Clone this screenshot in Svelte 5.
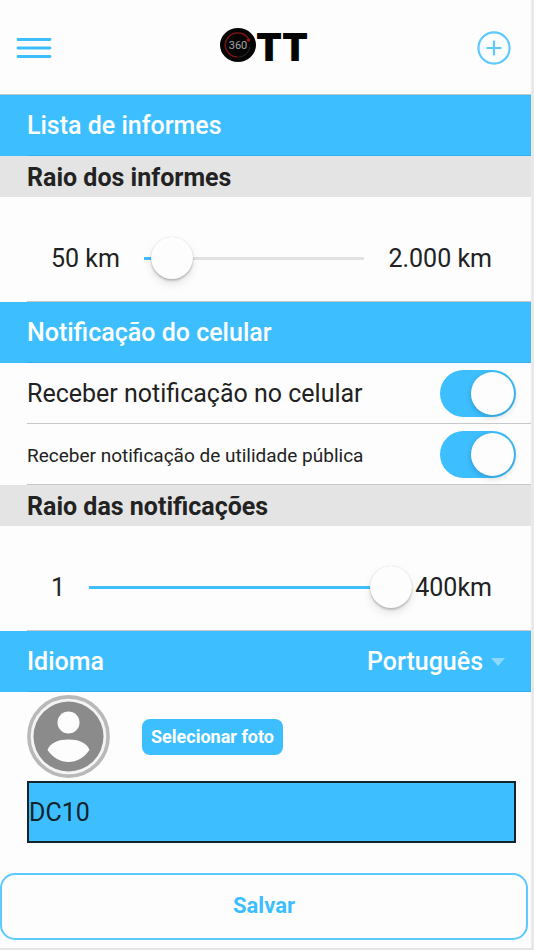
<script>
  let reportRadius = $state(50);
  let notifyRadius = $state(400);
  let mobile = $state(true);
  let publicUtility = $state(true);
  let language = $state('pt');
  let name = $state('DC10');

  const reportMin = 0;
  const reportMax = 390;
  const notifyMin = 1;
  const notifyMax = 400;

  const share = (value, min, max) => (value - min) / (max - min);
</script>

<div class="screen">
  <header>
    <button class="icon" aria-label="Menu">
      <svg width="36" height="24" viewBox="0 0 36 24" fill="none" stroke="#3dbfff" stroke-width="2.8" stroke-linecap="round">
        <path d="M2 3.500H34M2 12H34M2 20.500H34" />
      </svg>
    </button>
    <svg class="logo" width="88" height="40" viewBox="0 0 88 40" role="img" aria-label="360 OTT">
      <ellipse cx="18" cy="20" rx="18" ry="17" fill="#050505" />
      <path d="M28 13A12.500 12 0 1 0 18 32" fill="none" stroke="#7c1215" stroke-width="1.500" />
      <path d="M19 32A12 12 0 0 0 30 22" fill="none" stroke="#2b2b2b" stroke-width="1" />
      <circle cx="28.500" cy="15" r="1.700" fill="#a31518" />
      <text x="18" y="24" text-anchor="middle" class="degrees">360</text>
      <text x="36" y="36" class="letters">TT</text>
    </svg>
    <button class="icon" aria-label="Adicionar">
      <svg width="36" height="36" viewBox="0 0 36 36" fill="none" stroke="#5cc9ff" stroke-width="2.2">
        <circle cx="18" cy="18" r="15.600" />
        <path d="M18 10.500V25.500M10.500 18H25.500" />
      </svg>
    </button>
  </header>

  <main>
    <h2 class="bar"><span class="line">Lista de informes</span></h2>
    <h3>Raio dos informes</h3>
    <div class="row">
      <label class="line range">
        <span>50 km</span>
        <input
          type="range"
          aria-label="Raio dos informes"
          min={reportMin}
          max={reportMax}
          bind:value={reportRadius}
          style="--share: {share(reportRadius, reportMin, reportMax)}"
        />
        <span>2.000 km</span>
      </label>
    </div>

    <h2 class="bar"><span class="line">Notificação do celular</span></h2>
    <div class="row">
      <label class="line toggle">
        <span>Receber notificação no celular</span>
        <input type="checkbox" bind:checked={mobile} />
      </label>
    </div>
    <div class="row">
      <label class="line toggle">
        <span class="small">Receber notificação de utilidade pública</span>
        <input type="checkbox" bind:checked={publicUtility} />
      </label>
    </div>
    <h3>Raio das notificações</h3>
    <div class="row">
      <label class="line range">
        <span>1</span>
        <input
          type="range"
          aria-label="Raio das notificações"
          min={notifyMin}
          max={notifyMax}
          bind:value={notifyRadius}
          style="--share: {share(notifyRadius, notifyMin, notifyMax)}"
        />
        <span>400km</span>
      </label>
    </div>

    <div class="bar">
      <label class="line language">
        <span>Idioma</span>
        <span class="picker">
          <select bind:value={language}>
            <option value="pt">Português</option>
            <option value="en">English</option>
            <option value="es">Español</option>
          </select>
          <svg width="14" height="8" viewBox="0 0 14 8" aria-hidden="true"><path d="M0 0H14L7 8Z" fill="#8bd8ff" /></svg>
        </span>
      </label>
    </div>

    <form onsubmit={(event) => event.preventDefault()}>
      <div class="profile">
        <div class="photo">
          <svg width="83" height="83" viewBox="0 0 83 83" role="img" aria-label="Foto do perfil">
            <circle cx="41.500" cy="41.500" r="39.600" fill="#f4f4f4" stroke="#b9b9b9" stroke-width="3.600" />
            <circle cx="41.500" cy="41.500" r="35" fill="#8b8b8b" />
            <circle cx="41.500" cy="27.500" r="11" fill="#fdfdfd" />
            <path d="M20.500 55C23 47.500 32 44.500 41.500 44.500S60 47.500 62.500 55C57 63 49.500 67 41.500 67S26 63 20.500 55Z" fill="#fdfdfd" />
          </svg>
          <button type="button" class="pick">Selecionar foto</button>
        </div>
        <input class="name" type="text" aria-label="Nome" bind:value={name} />
      </div>
      <button type="submit" class="save">Salvar</button>
    </form>
  </main>
</div>

<style>
  :global(body) {
    background: #fdfdfd;
  }

  .screen {
    box-sizing: border-box;
    min-height: 100vh;
    border-right: 3px solid #e9e9e9;
    border-bottom: 2px solid #e4e4e4;
    background: #fdfdfd;
    color: #222;
    font: 400 25px/30px Roboto, sans-serif;
  }

  button,
  input,
  select {
    margin: 0;
    font: inherit;
    color: inherit;
  }

  header {
    display: flex;
    align-items: center;
    justify-content: space-between;
    box-sizing: border-box;
    height: 95px;
    padding: 2px 19px 0 16px;
    border-bottom: 1px solid #bfc6ca;
  }

  .icon {
    display: flex;
    padding: 0;
    border: 0;
    background: none;
  }

  .logo {
    margin-bottom: 6px;
    overflow: visible;
  }

  .degrees {
    font: 400 11px Roboto, sans-serif;
    fill: #a5a5a5;
  }

  .letters {
    font: 900 38px Inter, sans-serif;
    fill: #050505;
  }

  h2,
  h3 {
    margin: 0;
    font: inherit;
  }

  .bar {
    padding-left: 27px;
    background: #3dbfff;
    color: #fff;
    font-weight: 500;
  }

  .line {
    display: flex;
    align-items: center;
    box-sizing: border-box;
    min-height: 61px;
    border-bottom: 1px solid #c6c8ca;
  }

  .bar .line {
    padding-top: 2px;
    border-bottom: 1px solid #35b0ee;
  }

  h3 {
    box-sizing: border-box;
    height: 41px;
    padding: 7px 27px 0;
    background: #e4e4e4;
    font-weight: 700;
  }

  .row {
    padding-left: 27px;
  }

  .range {
    min-height: 105px;
    padding: 18px 39px 0 24px;
  }

  .range span {
    padding-top: 2px;
  }

  /* The thumb centre travels the whole track, so the box is 21px wider at each end. */
  .range input {
    flex: 1;
    min-width: 0;
    height: 42px;
    margin: 0 3px;
    appearance: none;
    background: none;
  }

  .range input::-webkit-slider-runnable-track {
    --end: calc(21px + (100% - 42px) * var(--share));
    height: 3px;
    background: linear-gradient(
      to right,
      transparent 21px,
      #3dbfff 21px,
      #3dbfff var(--end),
      #e2e2e2 var(--end),
      #e2e2e2 calc(100% - 21px),
      transparent calc(100% - 21px)
    );
  }

  .range input::-webkit-slider-thumb {
    width: 42px;
    height: 42px;
    margin-top: -20px;
    appearance: none;
    border-radius: 50%;
    background: #fdfdfd;
    box-shadow: 0 0 1px rgb(0 0 0 / 20%), 0 2px 2px rgb(0 0 0 / 18%), 0 5px 10px rgb(0 0 0 / 10%);
  }

  .toggle {
    justify-content: space-between;
    padding-right: 15px;
  }

  .toggle span {
    padding-top: 2px;
  }

  .toggle .small {
    padding-top: 4px;
    font-size: 19px;
  }

  .toggle input {
    display: flex;
    flex: none;
    box-sizing: border-box;
    width: 76px;
    height: 47px;
    padding: 2px;
    appearance: none;
    border-radius: 24px;
    background: #dcdcdc;
  }

  .toggle input::before {
    width: 43px;
    height: 43px;
    border-radius: 50%;
    background: #fdfdfd;
    box-shadow: 0 2px 6px rgb(0 0 0 / 20%);
    content: '';
  }

  .toggle input:checked {
    justify-content: flex-end;
    background: #3dbfff;
  }

  .language {
    justify-content: space-between;
    padding-right: 26px;
  }

  .picker {
    display: flex;
    align-items: center;
    gap: 8px;
  }

  select {
    padding: 0;
    appearance: none;
    border: 0;
    background: none;
  }

  option {
    color: #222;
  }

  .profile {
    display: flex;
    flex-direction: column;
    padding: 3px 15px 0 27px;
  }

  .photo {
    display: flex;
    align-items: center;
    gap: 32px;
    padding-bottom: 3px;
  }

  .pick {
    height: 36px;
    padding: 0 9px;
    border: 0;
    border-radius: 8px;
    background: #3dbfff;
    color: #fff;
    font-size: 18px;
    font-weight: 700;
  }

  .name {
    box-sizing: border-box;
    width: 100%;
    height: 62px;
    padding: 0;
    border: 2px solid #14222a;
    background: #3dbfff;
    color: #14222a;
  }

  .save {
    display: block;
    box-sizing: border-box;
    width: calc(100% - 3px);
    height: 67px;
    margin-top: 30px;
    padding: 0 0 2px;
    border: 2px solid #5cc9ff;
    border-radius: 15px;
    background: #fdfdfd;
    color: #3dbfff;
    font-weight: 700;
    font-size: 22px;
  }
</style>
